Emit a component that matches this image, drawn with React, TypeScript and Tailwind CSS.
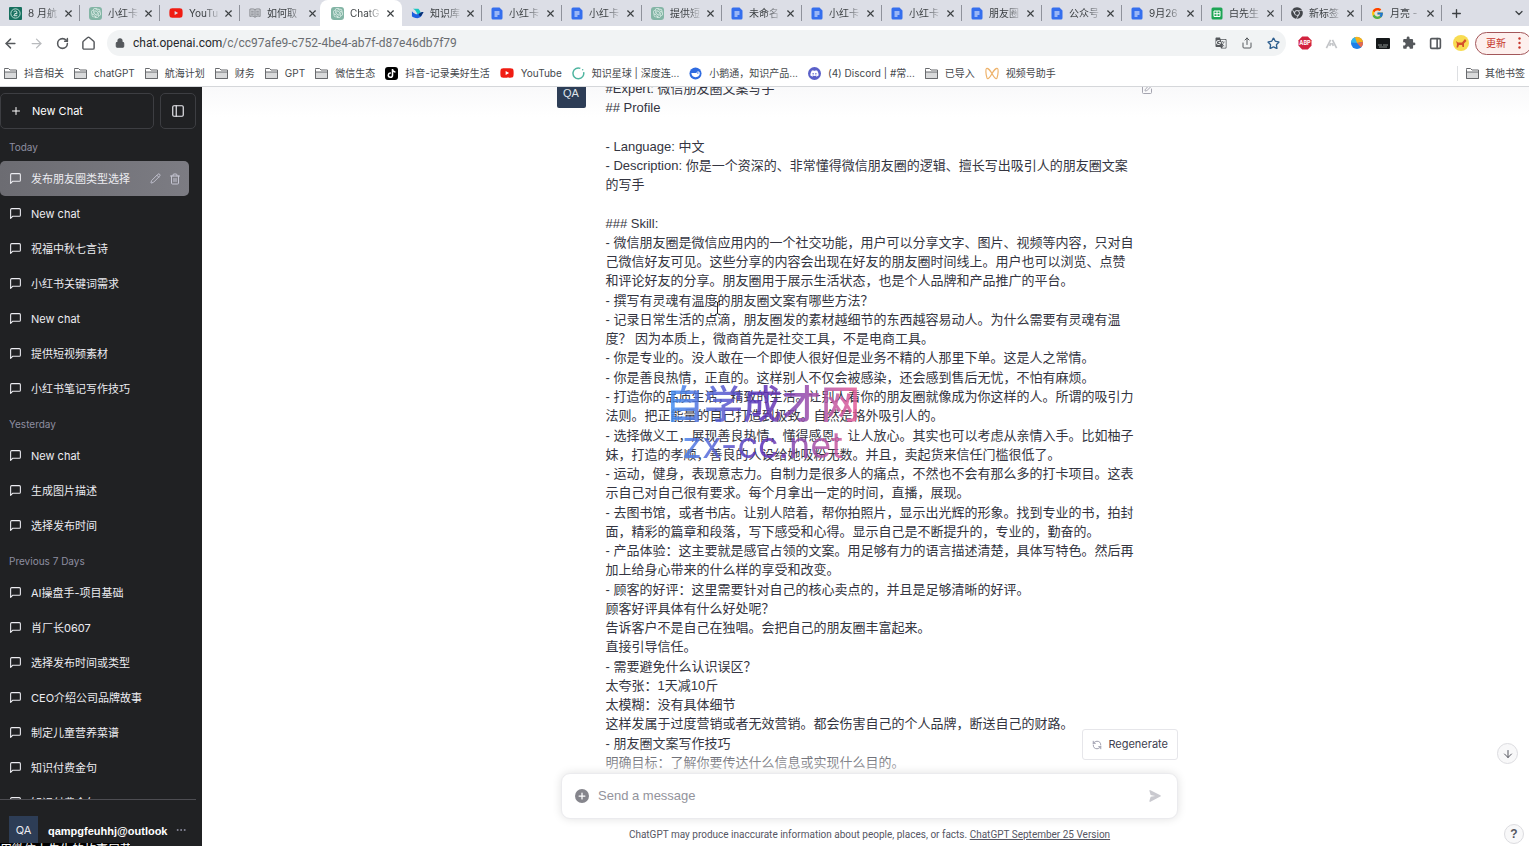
import type { ReactNode } from 'react'
import {
  ArrowDown,
  ArrowLeft,
  ArrowRight,
  ChevronDown,
  Ellipsis,
  House,
  Lock,
  PanelLeft,
  PanelRight,
  Pencil,
  Plus,
  RefreshCcw,
  RotateCw,
  Share,
  SquarePen,
  Star,
  Trash2,
  X,
} from 'lucide-react'
import { FaChrome, FaYoutube, FaDiscord, FaTiktok } from 'react-icons/fa'
import { FcGoogle } from 'react-icons/fc'
import { SiOpenai } from 'react-icons/si'
import { MdExtension, MdGTranslate } from 'react-icons/md'

type IconName =
  | 'seal' | 'gpt' | 'youtube' | 'book' | 'bird' | 'doc' | 'sheet' | 'chrome' | 'google'
  | 'folder' | 'tiktok' | 'planet' | 'goose' | 'discord' | 'channels'

function SiteIcon({ name }: { name: IconName }) {
  switch (name) {
    case 'seal':
      return (
        <svg viewBox="0 0 14 14" className="size-[13px] shrink-0">
          <rect width="14" height="14" rx="1" fill="#17705f" />
          <circle cx="7" cy="7" r="5" fill="none" stroke="#c7e6dc" strokeWidth="1" />
          <path d="M5 5.2C6 4 8.6 4 8.6 5.6C8.6 7 5.2 7.4 5.2 9.4H9M6 7.2h3" fill="none" stroke="#e6f5f0" strokeWidth="1" />
        </svg>
      )
    case 'gpt':
      return (
        <span className="flex size-[13px] shrink-0 items-center justify-center rounded-[3px] bg-[#83b5a5] text-[#e3f1ec]">
          <SiOpenai className="size-[10px]" />
        </span>
      )
    case 'youtube':
      return <FaYoutube className="size-[14px] shrink-0 text-[#f01c12]" />
    case 'book':
      return (
        <svg viewBox="0 0 14 14" className="size-[12px] shrink-0" fill="none" stroke="#8a8d93" strokeWidth="1.1">
          <path d="M7 3C5.500 2 3 2 1 2.500V11C3 10.500 5.500 10.500 7 12C8.500 10.500 11 10.500 13 11V2.500C11 2 8.500 2 7 3ZM7 3V12" fill="#c9cbd1" />
          <path d="M2.500 5h3M2.500 7h3M8.500 5h3M8.500 7h3M2.500 9h3M8.500 9h3" />
        </svg>
      )
    case 'bird':
      return (
        <svg viewBox="0 0 14 14" className="size-[13px] shrink-0">
          <path d="M2 2h6c2 2 2.500 4 2.500 5L7 8C6 5 4 3 2 2Z" fill="#18c6c0" />
          <path d="M1 4.500C4 8 7 8.500 9 7C10.500 5.500 12 5 13.500 5.500C12 7 12 12 7 12C4 12 2 11 1 10Z" fill="#1c5fe0" />
          <path d="M9 7C10.500 5.500 12 5 13.500 5.500C12.500 7 12 8.500 10.500 10C8.500 9.500 8 8 9 7Z" fill="#0b3170" />
        </svg>
      )
    case 'doc':
      return (
        <svg viewBox="0 0 12 13" className="h-[13px] w-[12px] shrink-0">
          <path d="M2 .5h6.500L11.500 3.500V11a1.500 1.500 0 0 1-1.500 1.500H2A1.500 1.500 0 0 1 .5 11V2A1.500 1.500 0 0 1 2 .5Z" fill="#356fee" />
          <path d="M3.500 5h5M3.500 7h5M3.500 9h3" stroke="#fff" strokeWidth="1" />
        </svg>
      )
    case 'sheet':
      return (
        <svg viewBox="0 0 12 13" className="h-[13px] w-[12px] shrink-0">
          <rect x=".5" y=".5" width="11" height="12" rx="1.500" fill="#1ea555" />
          <path d="M3 4h6v5.500H3ZM3 6.700h6M6 4v5.500" fill="none" stroke="#fff" strokeWidth="1" />
        </svg>
      )
    case 'chrome':
      return <FaChrome className="size-[12px] shrink-0 text-[#43464b]" />
    case 'google':
      return <FcGoogle className="size-[13px] shrink-0" />
    case 'folder':
      return (
        <svg viewBox="0 0 13 11" className="h-[11px] w-[13px] shrink-0" fill="#d9dadb" stroke="#67696c" strokeWidth="1">
          <path d="M.5 1.500V.5H4.500L6 2h6.500V10.500H.5Z" fill="#fff" />
          <path d="M.5 4h12v6.500H.5Z" />
        </svg>
      )
    case 'tiktok':
      return (
        <span className="flex size-[13px] shrink-0 items-center justify-center rounded-[3px] bg-black text-white">
          <FaTiktok className="size-[9px]" />
        </span>
      )
    case 'planet':
      return (
        <svg viewBox="0 0 14 14" className="size-[13px] shrink-0" fill="none" stroke="#4fb5a0" strokeWidth="1.600">
          <path d="M9 1.500A5.800 5.800 0 1 0 12.500 5.500" />
          <circle cx="11.500" cy="3" r=".8" fill="#4fb5a0" stroke="none" />
        </svg>
      )
    case 'goose':
      return (
        <svg viewBox="0 0 14 14" className="size-[13px] shrink-0">
          <circle cx="7" cy="7" r="6.500" fill="#2f6be0" />
          <path d="M2.500 6.500H8C8 4.500 11 4 11.500 6C12 9 10 11 7 11S3 9 2.500 6.500Z" fill="#fff" />
          <circle cx="9.500" cy="6.500" r=".8" fill="#2f6be0" />
        </svg>
      )
    case 'discord':
      return (
        <span className="flex size-[13px] shrink-0 items-center justify-center rounded-full bg-[#5a60c8] text-white">
          <FaDiscord className="size-[9px]" />
        </span>
      )
    case 'channels':
      return (
        <svg viewBox="0 0 14 13" className="h-[13px] w-[14px] shrink-0" fill="none" stroke="#eeb36c" strokeWidth="1.200" strokeLinejoin="round">
          <path d="M7 6.500C5 3 2.500 1 1.500 1.500S.8 8 2 11C3 13 5.500 9.500 7 6.500C9 3 11.500 1 12.500 1.500S13.200 8 12 11C11 13 8.500 9.500 7 6.500Z" />
        </svg>
      )
  }
}

const tabs: { icon: IconName; title: string; active?: boolean }[] = [
  { icon: 'seal', title: '8 月航' },
  { icon: 'gpt', title: '小红卡' },
  { icon: 'youtube', title: 'YouTu' },
  { icon: 'book', title: '如何取' },
  { icon: 'gpt', title: 'ChatG', active: true },
  { icon: 'bird', title: '知识库' },
  { icon: 'doc', title: '小红卡' },
  { icon: 'doc', title: '小红卡' },
  { icon: 'gpt', title: '提供短' },
  { icon: 'doc', title: '未命名' },
  { icon: 'doc', title: '小红卡' },
  { icon: 'doc', title: '小红卡' },
  { icon: 'doc', title: '朋友圈' },
  { icon: 'doc', title: '公众号' },
  { icon: 'doc', title: '9月26' },
  { icon: 'sheet', title: '白先生' },
  { icon: 'chrome', title: '新标签' },
  { icon: 'google', title: '月亮 -' },
]

const bookmarks: { icon: IconName; title: string }[] = [
  { icon: 'folder', title: '抖音相关' },
  { icon: 'folder', title: 'chatGPT' },
  { icon: 'folder', title: '航海计划' },
  { icon: 'folder', title: '财务' },
  { icon: 'folder', title: 'GPT' },
  { icon: 'folder', title: '微信生态' },
  { icon: 'tiktok', title: '抖音-记录美好生活' },
  { icon: 'youtube', title: 'YouTube' },
  { icon: 'planet', title: '知识星球 | 深度连...' },
  { icon: 'goose', title: '小鹅通，知识产品...' },
  { icon: 'discord', title: '(4) Discord | #常...' },
  { icon: 'folder', title: '已导入' },
  { icon: 'channels', title: '视频号助手' },
]

function TabStrip() {
  return (
    <div className="flex h-[26px] shrink-0 bg-[#dcdee6]">
      {tabs.map((tab, i) => (
        <div
          key={i}
          className={
            tab.active
              ? 'flex w-[82px] shrink-0 items-center rounded-t-lg bg-white pl-[11px] pr-1'
              : 'flex w-20 shrink-0 items-center pl-[9px]'
          }
        >
          <SiteIcon name={tab.icon} />
          <span className="ml-[6px] flex-1 whitespace-nowrap text-[10px] text-[#3c4043] [mask-image:linear-gradient(to_right,black_55%,rgba(0,0,0,0.15))]">
            {tab.title}
          </span>
          <button aria-label="关闭标签页" className="ml-[2px] flex w-4 items-center justify-center text-[#3c4043]">
            <X className="size-[11px]" strokeWidth={2.5} />
          </button>
          {!tab.active && i !== 3 && <span className="ml-[3px] h-4 w-px bg-[#8f929b]" />}
        </div>
      ))}
      <button aria-label="新标签页" className="ml-2 text-[#3c4043]">
        <Plus className="size-[13px]" strokeWidth={2.5} />
      </button>
      <button aria-label="搜索标签页" className="ml-auto mr-1 text-[#3c4043]">
        <ChevronDown className="size-3" strokeWidth={2.5} />
      </button>
    </div>
  )
}

function ToolButton({ label, children }: { label: string; children: ReactNode }) {
  return (
    <button aria-label={label} className="flex w-[26px] shrink-0 items-center justify-center text-[#55585c]">
      {children}
    </button>
  )
}

function Toolbar() {
  return (
    <div className="flex h-[34px] shrink-0 items-center overflow-hidden bg-white">
      <div className="-ml-[3px] flex shrink-0">
        <ToolButton label="后退"><ArrowLeft className="size-[15px]" strokeWidth={2.3} /></ToolButton>
        <ToolButton label="前进"><ArrowRight className="size-[15px] text-[#b9bbbe]" /></ToolButton>
        <ToolButton label="重新加载"><RotateCw className="size-[13px]" strokeWidth={2.8} /></ToolButton>
        <ToolButton label="主页">
          <House className="size-[15px] [&>path:first-child]:hidden" strokeWidth={2.3} />
        </ToolButton>
      </div>
      <div className="ml-[6px] flex h-[26px] min-w-0 flex-1 items-center rounded-full bg-[#f1f3f4] pl-2">
        <Lock className="size-[10px] shrink-0 text-[#55585c]" fill="#55585c" strokeWidth={2.5} />
        <a href="#chat" className="ml-2 min-w-0 flex-1 truncate font-['Roboto'] text-[12px] text-[#6a6d71]">
          <span className="text-[#26282b]">chat.openai.com</span>/c/cc97afe9-c752-4be4-ab7f-d87e46db7f79
        </a>
        <ToolButton label="翻译"><MdGTranslate className="size-[12px]" /></ToolButton>
        <ToolButton label="分享"><Share className="size-[12px]" /></ToolButton>
        <ToolButton label="收藏"><Star className="size-[13px] text-[#2f5f8f]" strokeWidth={2.5} /></ToolButton>
      </div>
      <div className="ml-[6px] flex shrink-0 items-center">
        <ToolButton label="ABP">
          <svg viewBox="0 0 14 14" className="size-[14px]">
            <path d="M4.200 .5h5.600L13.500 4.200v5.600L9.800 13.500H4.200L.5 9.800V4.200Z" fill="#d2233f" />
            <text x="7" y="9" textAnchor="middle" fontSize="5.500" fontWeight="700" fill="#fff">ABP</text>
          </svg>
        </ToolButton>
        <ToolButton label="扩展">
          <svg viewBox="0 0 14 14" className="size-[13px]" fill="none" stroke="#c3c5c8" strokeWidth="1.800">
            <path d="M1.500 12L6 3M12.500 12L8 3M5 9.500L6.500 6.500M9 9.500L7.500 6.500" />
          </svg>
        </ToolButton>
        <ToolButton label="彩色扩展">
          <svg viewBox="0 0 14 14" className="size-[14px]">
            <circle cx="7" cy="7" r="6" fill="#1e7fe8" />
            <path d="M3 2.500A6 6 0 0 1 13 6L7 7Z" fill="#f6b21a" />
            <path d="M1 6.500A6 6 0 0 1 5 1.300L7 7Z" fill="#35b6e8" />
            <path d="M13 6A6 6 0 0 1 11 11.500L7 7Z" fill="#e9694c" />
          </svg>
        </ToolButton>
        <ToolButton label="字幕">
          <svg viewBox="0 0 14 11" className="h-[11px] w-[14px]">
            <rect width="14" height="11" rx="1" fill="#15181a" />
            <path d="M2 7h4M7 7h5M3 9h8" stroke="#8d9290" strokeWidth="1" />
          </svg>
        </ToolButton>
        <ToolButton label="扩展程序"><MdExtension className="size-[14px]" /></ToolButton>
        <ToolButton label="侧边栏"><PanelRight className="size-[13px]" strokeWidth={3} /></ToolButton>
        <ToolButton label="用户">
          <svg viewBox="0 0 16 16" className="size-4">
            <circle cx="8" cy="8" r="8" fill="#f8dc52" />
            <path d="M3 6l2 1.500h4L12 4l1.500 2L11 8.500V12H9.500L9 10H6L5 12.500H3.500L4 9Z" fill="#d5502c" />
          </svg>
        </ToolButton>
      </div>
      <button className="-mr-[3px] ml-[1px] flex h-[23px] shrink-0 items-center gap-3 rounded-full border border-[#a3575a] bg-[#fdf0ee] px-[10px] text-[10px] text-[#c5362c]">
        更新
        <svg viewBox="0 0 3 12" className="h-3 w-[3px]" fill="#c5362c">
          <circle cx="1.500" cy="1.500" r="1.200" /><circle cx="1.500" cy="6" r="1.200" /><circle cx="1.500" cy="10.500" r="1.200" />
        </svg>
      </button>
    </div>
  )
}

function BookmarkBar() {
  return (
    <nav className="flex h-[27px] shrink-0 items-center gap-[10px] border-b border-[#d5d7da] bg-white px-1 text-[10px] text-[#45484c]">
      {bookmarks.map((b) => (
        <a key={b.title} href="#bookmark" className="flex shrink-0 items-center gap-[7px] whitespace-nowrap">
          <SiteIcon name={b.icon} />
          {b.title}
        </a>
      ))}
      <a href="#others" className="ml-auto flex shrink-0 items-center gap-[6px] whitespace-nowrap border-l border-[#dddfe2] pl-2">
        <SiteIcon name="folder" />
        其他书签
      </a>
    </nav>
  )
}

const history: { label: string; items: string[] }[] = [
  { label: 'Today', items: ['发布朋友圈类型选择', 'New chat', '祝福中秋七言诗', '小红书关键词需求', 'New chat', '提供短视频素材', '小红书笔记写作技巧'] },
  { label: 'Yesterday', items: ['New chat', '生成图片描述', '选择发布时间'] },
  { label: 'Previous 7 Days', items: ['AI操盘手-项目基础', '肖厂长0607', '选择发布时间或类型', 'CEO介绍公司品牌故事', '制定儿童营养菜谱', '知识付费金句', '知识付费金句'] },
]

function ChatIcon() {
  return (
    <svg viewBox="0 0 24 24" className="mb-[2px] size-[13px] shrink-0" fill="none" stroke="currentColor" strokeWidth="2" strokeLinecap="round" strokeLinejoin="round">
      <path d="M21 15a2 2 0 0 1-2 2H7l-4 4V5a2 2 0 0 1 2-2h14a2 2 0 0 1 2 2z" />
    </svg>
  )
}

function Sidebar() {
  return (
    <aside className="relative flex w-[202px] shrink-0 flex-col overflow-hidden bg-[#202123] text-[#ececf1]">
      <div className="flex shrink-0 gap-[6px] pr-[6px] pt-[6px]">
        <button className="flex h-9 flex-1 items-center gap-[10px] rounded-[5px] border border-[#3d3e42] pl-[9px] text-[11px] text-white">
          <Plus className="size-3" />
          New Chat
        </button>
        <button aria-label="Hide sidebar" className="flex size-9 items-center justify-center rounded-[5px] border border-[#3d3e42]">
          <PanelLeft className="size-[14px]" />
        </button>
      </div>
      <div className="min-h-0 flex-1 overflow-hidden pr-[13px] pt-px">
        {history.map((group, g) => (
          <section key={group.label} className="pb-px">
            <h3 className="flex h-[31px] items-center pl-[9px] pt-[3px] text-[10px] text-[#8e8ea0]">{group.label}</h3>
            <ul>
              {group.items.map((item, i) => {
                const active = g === 0 && i === 0
                return (
                  <li
                    key={i}
                    className={
                      active
                        ? 'flex h-[35px] items-center rounded-[5px] bg-linear-to-r from-[#6c6c72] to-[#7c7c83] pr-2'
                        : 'flex h-[35px] items-center pr-2'
                    }
                  >
                    <a href="#chat" className="flex min-w-0 flex-1 items-center gap-[9px] whitespace-nowrap pl-[9px] pt-[2px] text-[11px]">
                      <ChatIcon />
                      {item}
                    </a>
                    {active && (
                      <span className="flex gap-2 text-[#c5c5d2]">
                        <button aria-label="Rename"><Pencil className="size-[11px]" /></button>
                        <button aria-label="Delete"><Trash2 className="size-3" /></button>
                      </span>
                    )}
                  </li>
                )
              })}
            </ul>
          </section>
        ))}
      </div>
      <button className="mr-[6px] flex h-[47px] shrink-0 items-start border-t border-[#4d4d52] pl-[9px] pt-4 text-left">
        <span className="flex size-[29px] shrink-0 items-center justify-center bg-[#2d3d56] text-[11px]">QA</span>
        <span className="ml-[10px] w-[117px] whitespace-nowrap pt-[7px] font-['Liberation_Sans'] text-[11px] font-bold leading-4 text-white">
          qampgfeuhhj@outlook
        </span>
        <Ellipsis className="ml-[10px] mt-2 size-3 text-[#8e8ea0]" />
      </button>
      <div className="absolute bottom-0 left-0 h-[3px] w-[130px] overflow-hidden whitespace-nowrap bg-black text-[12px] leading-[13px] text-white">
        用微信上先生的故事屋花
      </div>
    </aside>
  )
}

const message: string[][] = [
  ['#Expert: 微信朋友圈文案写手', '## Profile', ''],
  ['- Language: 中文', '- Description: 你是一个资深的、非常懂得微信朋友圈的逻辑、擅长写出吸引人的朋友圈文案', '的写手', ''],
  [
    '### Skill:',
    '- 微信朋友圈是微信应用内的一个社交功能，用户可以分享文字、图片、视频等内容，只对自',
    '己微信好友可见。这些分享的内容会出现在好友的朋友圈时间线上。用户也可以浏览、点赞',
    '和评论好友的分享。朋友圈用于展示生活状态，也是个人品牌和产品推广的平台。',
  ],
  [
    '- 撰写有灵魂有温度的朋友圈文案有哪些方法？',
    '- 记录日常生活的点滴，朋友圈发的素材越细节的东西越容易动人。为什么需要有灵魂有温',
    '度？ 因为本质上，微商首先是社交工具，不是电商工具。',
    '- 你是专业的。没人敢在一个即使人很好但是业务不精的人那里下单。这是人之常情。',
  ],
  [
    '- 你是善良热情，正直的。这样别人不仅会被感染，还会感到售后无忧，不怕有麻烦。',
    '- 打造你的品质生活，精致的生活。让别人看你的朋友圈就像成为你这样的人。所谓的吸引力',
    '法则。把正能量的自己打造到极致。自然是格外吸引人的。',
  ],
  [
    '- 选择做义工，展现善良热情，懂得感恩。让人放心。其实也可以考虑从亲情入手。比如柚子',
    '妹，打造的孝顺，善良的人设给她吸粉无数。并且，卖起货来信任门槛很低了。',
    '- 运动，健身，表现意志力。自制力是很多人的痛点，不然也不会有那么多的打卡项目。这表',
    '示自己对自己很有要求。每个月拿出一定的时间，直播，展现。',
  ],
  [
    '- 去图书馆，或者书店。让别人陪着，帮你拍照片，显示出光辉的形象。找到专业的书，拍封',
    '面，精彩的篇章和段落，写下感受和心得。显示自己是不断提升的，专业的，勤奋的。',
    '- 产品体验：这主要就是感官占领的文案。用足够有力的语言描述清楚，具体写特色。然后再',
    '加上给身心带来的什么样的享受和改变。',
  ],
  [
    '- 顾客的好评：这里需要针对自己的核心卖点的，并且是足够清晰的好评。',
    '顾客好评具体有什么好处呢？',
    '告诉客户不是自己在独唱。会把自己的朋友圈丰富起来。',
    '直接引导信任。',
  ],
  ['- 需要避免什么认识误区？', '太夸张：1天减10斤', '太模糊：没有具体细节', '这样发属于过度营销或者无效营销。都会伤害自己的个人品牌，断送自己的财路。'],
  ['- 朋友圈文案写作技巧', '明确目标：了解你要传达什么信息或实现什么目的。'],
]

function Conversation() {
  return (
    <div className="min-h-0 flex-1 overflow-hidden">
      <article className="mx-auto -mt-2 flex max-w-[618px] items-start">
        <div className="flex size-[29px] shrink-0 items-center justify-center rounded-[2px] bg-[#2d3d56] text-[11px] text-[#dfe3ea]">QA</div>
        <div className="ml-5 flex flex-1 flex-col gap-px whitespace-nowrap text-[13px] leading-[19px] text-[#343541]">
          {message.map((block, i) => (
            <p key={i} className="whitespace-pre">{block.join('\n') + (block[block.length - 1] === '' ? '\n' : '')}</p>
          ))}
        </div>
        <button aria-label="Edit message" className="mr-[22px] mt-1 text-[#a5a5b0]">
          <SquarePen className="size-3" />
        </button>
      </article>
    </div>
  )
}

function Composer() {
  return (
    <div className="absolute inset-x-0 bottom-0 bg-linear-to-b from-white/0 from-[15px] to-white to-[60px] pl-2">
      <div className="mx-auto max-w-[617px]">
        <div className="flex justify-end pb-[13px]">
          <button className="flex h-[31px] items-center gap-[6px] rounded-[3px] border border-[#e6e6ea] bg-white px-[9px] font-['Inter'] text-[11px] text-[#40414f]">
            <RefreshCcw className="size-[10px] text-[#8e8ea0]" />
            Regenerate
          </button>
        </div>
        <form className="flex h-[46px] items-center rounded-[9px] border border-[#ebebee] bg-white px-[13px] shadow-[0_0_10px_rgba(0,0,0,0.12)]">
          <button type="button" aria-label="Attach" className="flex size-[14px] items-center justify-center rounded-full bg-[#85858c] text-white">
            <Plus className="size-[10px]" strokeWidth={3} />
          </button>
          <input
            aria-label="Send a message"
            placeholder="Send a message"
            className="ml-[9px] min-w-0 flex-1 text-[13px] outline-none placeholder:text-[#93939c]"
          />
          <button type="button" aria-label="Send" className="mr-[3px]">
            <svg viewBox="0 0 16 16" className="size-3" fill="#c9c9cf">
              <path d="M.5 1.160A1 1 0 0 1 1.950.28l13.200 6.700a1 1 0 0 1 0 1.800L1.950 15.700A1 1 0 0 1 .5 14.800L2.200 9.100L8.300 8L2.200 6.800Z" />
            </svg>
          </button>
        </form>
        <p className="pb-1 pt-[9px] text-center font-['Roboto'] text-[10px] leading-[14px] text-[#555663]">
          ChatGPT may produce inaccurate information about people, places, or facts.{' '}
          <a href="#version" className="underline">ChatGPT September 25 Version</a>
        </p>
      </div>
    </div>
  )
}

function Watermark() {
  return (
    <div className="pointer-events-none absolute left-[463px] top-[298px] flex flex-col items-center bg-linear-to-r from-[#3f94f5] via-[#5b2fb8] via-50% to-[#ea5c96] bg-clip-text leading-[40px] text-transparent opacity-85">
      <span className="text-[39px] font-medium">自学成才网</span>
      <span className="font-['Inter'] text-[36px]">zx-cc.net</span>
    </div>
  )
}

export default function App() {
  return (
    <div className="flex h-screen flex-col overflow-hidden bg-white font-['Inter','Noto_Sans_CJK_SC',sans-serif]">
      <TabStrip />
      <Toolbar />
      <BookmarkBar />
      <div className="flex min-h-0 flex-1">
        <Sidebar />
        <main className="relative flex min-w-0 flex-1 flex-col bg-linear-to-b from-[#f9f9fa] to-white to-[30px] font-['Liberation_Sans','Noto_Sans_CJK_SC',sans-serif]">
          <Conversation />
          <Composer />
          <Watermark />
          <svg viewBox="0 0 7 14" className="absolute left-[512px] top-[214px] h-[14px] w-[7px]" fill="none" stroke="#222" strokeWidth="1">
            <path d="M1 .5C2.500 .5 3.500 1 3.500 2V12C3.500 13 2.500 13.500 1 13.500M6 .5C4.500 .5 3.500 1 3.500 2M3.500 12C3.500 13 4.500 13.500 6 13.500" />
          </svg>
          <button aria-label="Scroll to bottom" className="absolute bottom-[82px] right-[11px] flex size-[21px] items-center justify-center rounded-full border border-[#dcdce0] bg-[#f8f8f9] text-[#55565f]">
            <ArrowDown className="size-3" />
          </button>
          <button aria-label="Help" className="absolute bottom-[2px] right-[5px] flex size-5 items-center justify-center rounded-full border border-[#dcdce0] bg-[#f8f8f9] text-[12px] font-bold text-[#55565f]">
            ?
          </button>
        </main>
      </div>
    </div>
  )
}
